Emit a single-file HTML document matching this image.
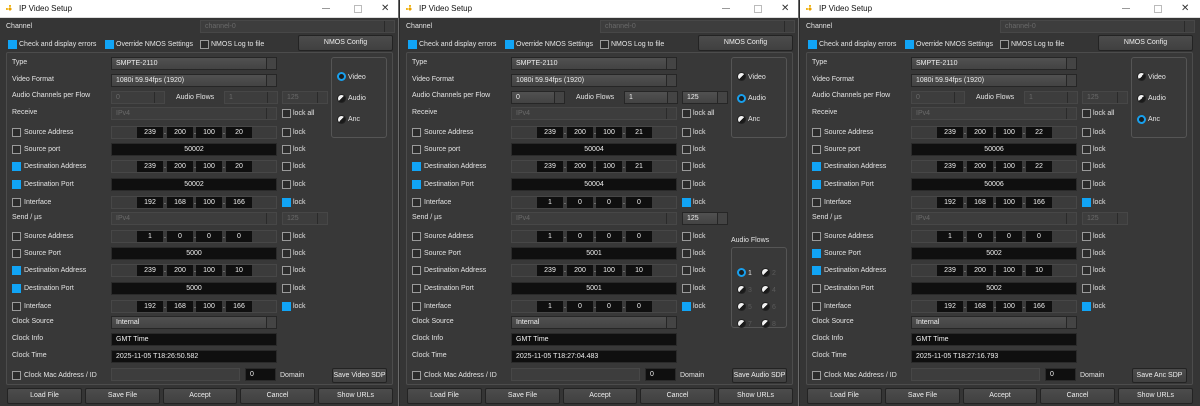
<!DOCTYPE html>
<html><head><meta charset="utf-8"><style>
*{box-sizing:border-box;margin:0;padding:0}
body{width:1200px;height:406px;background:#2b2b2b;overflow:hidden;position:relative;font-family:"Liberation Sans",sans-serif;font-size:7px;color:#e4e4e4}
.w{position:absolute;top:0;width:399px;height:406px;background:#353535;overflow:hidden;border-right:1px solid #6a6a6a}
.w>*{position:absolute}
.tb{left:0;top:0;width:100%;height:18px;background:#fff;border-bottom:1px solid #ddd;color:#111}
.tb .tt{position:absolute;left:19px;top:4px;font-size:8px}
.tb .ic{position:absolute;left:6px;top:5px;width:8px;height:8px;border-radius:50%;background:radial-gradient(circle,#e8a000 25%,transparent 30%),radial-gradient(circle at 10% 50%,#f0b000 12%,transparent 15%),radial-gradient(circle at 50% 10%,#f0b000 12%,transparent 15%)}
.tb .mn{position:absolute;left:322px;top:8px;width:8px;border-top:1px solid #999}
.tb .mx{position:absolute;left:354px;top:5px;width:8px;height:8px;border:1px solid #bbb}
.tb .cl{position:absolute;left:381px;top:3px;font-size:10px;color:#333}
.l{line-height:12px;white-space:nowrap;transform:translateY(1px)}
.cb{width:9px;height:9px;border:1px solid #9a9a9a;background:#2c2c2c}
.cb.on{background:#11a4f5;border-color:#11a4f5}
.f{height:13px;background:#0f0f0f;border:1px solid #2a2a2a;text-align:center;line-height:11px;color:#eee}
.cmb{height:13px;background:linear-gradient(#515151,#434343);border:1px solid #262626;line-height:11px;padding-left:4px;color:#eee}
.cmb s{position:absolute;right:0;top:0;width:10px;height:100%;border-left:1px solid #262626;background:#444}
.dis{background:#3d3d3d;border-color:#474747;color:#6a6a6a}
.dis s{background:#3d3d3d;border-left-color:#2a2a2a}
.ip{left:111px;width:166px;height:13px;background:#3b3b3b;border:1px solid #474747}
.ip i,.ip b{position:absolute;top:0;height:11px;line-height:11px;font-style:normal;text-align:center;color:#eee}
.ip i{width:26px;background:#0f0f0f}
.ip b{width:4px;font-weight:normal}
.grp{left:6px;top:52px;width:387px;height:333px;border:1px solid #4c4c4c;border-radius:2px;background:#383838}
.rb{border:1px solid #555;border-radius:3px;background:#393939}
.r{width:9px;height:9px;border-radius:50%;background:linear-gradient(135deg,#f2f2f2 50%,#1a1a1a 50%);border:1px solid #222}
.r.on{background:#1d1d1d;border:2px solid #18a0ee}
.bt{height:16px;background:linear-gradient(#4c4c4c,#404040);border:1px solid #232323;border-radius:2px;text-align:center;line-height:14px;color:#eee;white-space:nowrap;overflow:hidden}
.g{color:#5a5a5a}
</style></head><body>

<!-- WINDOW 1 -->
<div class="w" style="left:0">
<div class="tb"><span class="ic"></span><span class="tt">IP Video Setup</span><span class="mn"></span><span class="mx"></span><span class="cl">✕</span></div>
<div class="l" style="left:6px;top:20px">Channel</div>
<div class="cmb dis" style="left:200px;top:20px;width:195px">channel-0<s></s></div>
<div class="cb on" style="left:8px;top:40px"></div><div class="l" style="left:19px;top:38px">Check and display errors</div>
<div class="cb on" style="left:105px;top:40px"></div><div class="l" style="left:116px;top:38px">Override NMOS Settings</div>
<div class="cb" style="left:200px;top:40px"></div><div class="l" style="left:211px;top:38px">NMOS Log to file</div>
<div class="bt" style="left:298px;top:35px;width:95px">NMOS Config</div>
<div class="grp"></div>
<div class="rb" style="left:331px;top:57px;width:56px;height:81px"></div>
<div class="r on" style="left:337px;top:72px"></div><div class="l" style="left:348px;top:71px">Video</div>
<div class="r" style="left:337px;top:94px"></div><div class="l" style="left:348px;top:92px">Audio</div>
<div class="r" style="left:337px;top:115px"></div><div class="l" style="left:348px;top:113px">Anc</div>

<div class="l" style="left:12px;top:56px">Type</div>
<div class="cmb" style="left:111px;top:57px;width:166px">SMPTE-2110<s></s></div>
<div class="l" style="left:12px;top:73px">Video Format</div>
<div class="cmb" style="left:111px;top:74px;width:166px">1080i 59.94fps (1920)<s></s></div>
<div class="l" style="left:12px;top:89px">Audio Channels per Flow</div>
<div class="cmb dis" style="left:111px;top:91px;width:54px">0<s></s></div>
<div class="l" style="left:176px;top:91px">Audio Flows</div>
<div class="cmb dis" style="left:224px;top:91px;width:54px">1<s></s></div>
<div class="cmb dis" style="left:282px;top:91px;width:46px">125<s></s></div>
<div class="l" style="left:12px;top:106px">Receive</div>
<div class="cmb dis" style="left:111px;top:107px;width:166px">IPv4<s></s></div>
<div class="cb" style="left:282px;top:109px"></div><div class="l" style="left:293px;top:107px">lock all</div>

<div class="cb" style="left:12px;top:128px"></div><div class="l" style="left:24px;top:126px">Source Address</div>
<div class="ip" style="top:126px"><i style="left:25px">239</i><b style="left:51px">.</b><i style="left:55px">200</i><b style="left:81px">.</b><i style="left:84px">100</i><b style="left:110px">.</b><i style="left:114px">20</i></div>
<div class="cb" style="left:282px;top:128px"></div><div class="l" style="left:293px;top:126px">lock</div>
<div class="cb" style="left:12px;top:145px"></div><div class="l" style="left:24px;top:143px">Source port</div>
<div class="f" style="left:111px;top:143px;width:166px">50002</div>
<div class="cb" style="left:282px;top:145px"></div><div class="l" style="left:293px;top:143px">lock</div>
<div class="cb on" style="left:12px;top:162px"></div><div class="l" style="left:24px;top:160px">Destination Address</div>
<div class="ip" style="top:160px"><i style="left:25px">239</i><b style="left:51px">.</b><i style="left:55px">200</i><b style="left:81px">.</b><i style="left:84px">100</i><b style="left:110px">.</b><i style="left:114px">20</i></div>
<div class="cb" style="left:282px;top:162px"></div><div class="l" style="left:293px;top:160px">lock</div>
<div class="cb on" style="left:12px;top:180px"></div><div class="l" style="left:24px;top:178px">Destination Port</div>
<div class="f" style="left:111px;top:178px;width:166px">50002</div>
<div class="cb" style="left:282px;top:180px"></div><div class="l" style="left:293px;top:178px">lock</div>
<div class="cb" style="left:12px;top:198px"></div><div class="l" style="left:24px;top:196px">Interface</div>
<div class="ip" style="top:196px"><i style="left:25px">192</i><b style="left:51px">.</b><i style="left:55px">168</i><b style="left:81px">.</b><i style="left:84px">100</i><b style="left:110px">.</b><i style="left:114px">166</i></div>
<div class="cb on" style="left:282px;top:198px"></div><div class="l" style="left:293px;top:196px">lock</div>

<div class="l" style="left:12px;top:211px">Send / µs</div>
<div class="cmb dis" style="left:111px;top:212px;width:166px">IPv4<s></s></div>
<div class="cmb dis" style="left:282px;top:212px;width:46px">125<s></s></div>
<div class="cb" style="left:12px;top:232px"></div><div class="l" style="left:24px;top:230px">Source Address</div>
<div class="ip" style="top:230px"><i style="left:25px">1</i><b style="left:51px">.</b><i style="left:55px">0</i><b style="left:81px">.</b><i style="left:84px">0</i><b style="left:110px">.</b><i style="left:114px">0</i></div>
<div class="cb" style="left:282px;top:232px"></div><div class="l" style="left:293px;top:230px">lock</div>
<div class="cb" style="left:12px;top:249px"></div><div class="l" style="left:24px;top:247px">Source Port</div>
<div class="f" style="left:111px;top:247px;width:166px">5000</div>
<div class="cb" style="left:282px;top:249px"></div><div class="l" style="left:293px;top:247px">lock</div>
<div class="cb on" style="left:12px;top:266px"></div><div class="l" style="left:24px;top:264px">Destination Address</div>
<div class="ip" style="top:264px"><i style="left:25px">239</i><b style="left:51px">.</b><i style="left:55px">200</i><b style="left:81px">.</b><i style="left:84px">100</i><b style="left:110px">.</b><i style="left:114px">10</i></div>
<div class="cb" style="left:282px;top:266px"></div><div class="l" style="left:293px;top:264px">lock</div>
<div class="cb on" style="left:12px;top:284px"></div><div class="l" style="left:24px;top:282px">Destination Port</div>
<div class="f" style="left:111px;top:282px;width:166px">5000</div>
<div class="cb" style="left:282px;top:284px"></div><div class="l" style="left:293px;top:282px">lock</div>
<div class="cb" style="left:12px;top:302px"></div><div class="l" style="left:24px;top:300px">Interface</div>
<div class="ip" style="top:300px"><i style="left:25px">192</i><b style="left:51px">.</b><i style="left:55px">168</i><b style="left:81px">.</b><i style="left:84px">100</i><b style="left:110px">.</b><i style="left:114px">166</i></div>
<div class="cb on" style="left:282px;top:302px"></div><div class="l" style="left:293px;top:300px">lock</div>

<div class="l" style="left:12px;top:315px">Clock Source</div>
<div class="cmb" style="left:111px;top:316px;width:166px">Internal<s></s></div>
<div class="l" style="left:12px;top:332px">Clock Info</div>
<div class="f" style="left:111px;top:333px;width:166px;text-align:left;padding-left:4px">GMT Time</div>
<div class="l" style="left:12px;top:349px">Clock Time</div>
<div class="f" style="left:111px;top:350px;width:166px;text-align:left;padding-left:4px">2025-11-05 T18:26:50.582</div>
<div class="cb" style="left:12px;top:371px"></div><div class="l" style="left:24px;top:369px">Clock Mac Address / ID</div>
<div class="f dis" style="left:111px;top:368px;width:129px"></div>
<div class="f" style="left:245px;top:368px;width:31px;text-align:left;padding-left:4px">0</div>
<div class="l" style="left:280px;top:369px">Domain</div>
<div class="bt" style="left:332px;top:368px;width:55px;height:15px;line-height:13px">Save Video SDP</div>

<div class="bt" style="left:7px;top:388px;width:75px">Load File</div>
<div class="bt" style="left:85px;top:388px;width:75px">Save File</div>
<div class="bt" style="left:163px;top:388px;width:74px">Accept</div>
<div class="bt" style="left:240px;top:388px;width:75px">Cancel</div>
<div class="bt" style="left:318px;top:388px;width:75px">Show URLs</div>
</div>

<!-- WINDOW 2 -->
<div class="w" style="left:400px">
<div class="tb"><span class="ic"></span><span class="tt">IP Video Setup</span><span class="mn"></span><span class="mx"></span><span class="cl">✕</span></div>
<div class="l" style="left:6px;top:20px">Channel</div>
<div class="cmb dis" style="left:200px;top:20px;width:195px">channel-0<s></s></div>
<div class="cb on" style="left:8px;top:40px"></div><div class="l" style="left:19px;top:38px">Check and display errors</div>
<div class="cb on" style="left:105px;top:40px"></div><div class="l" style="left:116px;top:38px">Override NMOS Settings</div>
<div class="cb" style="left:200px;top:40px"></div><div class="l" style="left:211px;top:38px">NMOS Log to file</div>
<div class="bt" style="left:298px;top:35px;width:95px">NMOS Config</div>
<div class="grp"></div>
<div class="rb" style="left:331px;top:57px;width:56px;height:81px"></div>
<div class="r" style="left:337px;top:72px"></div><div class="l" style="left:348px;top:71px">Video</div>
<div class="r on" style="left:337px;top:94px"></div><div class="l" style="left:348px;top:92px">Audio</div>
<div class="r" style="left:337px;top:115px"></div><div class="l" style="left:348px;top:113px">Anc</div>

<div class="l" style="left:331px;top:234px">Audio Flows</div>
<div class="rb" style="left:331px;top:247px;width:56px;height:81px"></div>
<div class="r on" style="left:337px;top:268px"></div><div class="l" style="left:348px;top:267px">1</div>
<div class="r" style="left:361px;top:268px"></div><div class="l g" style="left:372px;top:267px">2</div>
<div class="r" style="left:337px;top:285px"></div><div class="l g" style="left:348px;top:284px">3</div>
<div class="r" style="left:361px;top:285px"></div><div class="l g" style="left:372px;top:284px">4</div>
<div class="r" style="left:337px;top:302px"></div><div class="l g" style="left:348px;top:301px">5</div>
<div class="r" style="left:361px;top:302px"></div><div class="l g" style="left:372px;top:301px">6</div>
<div class="r" style="left:337px;top:319px"></div><div class="l g" style="left:348px;top:318px">7</div>
<div class="r" style="left:361px;top:319px"></div><div class="l g" style="left:372px;top:318px">8</div>

<div class="l" style="left:12px;top:56px">Type</div>
<div class="cmb" style="left:111px;top:57px;width:166px">SMPTE-2110<s></s></div>
<div class="l" style="left:12px;top:73px">Video Format</div>
<div class="cmb" style="left:111px;top:74px;width:166px">1080i 59.94fps (1920)<s></s></div>
<div class="l" style="left:12px;top:89px">Audio Channels per Flow</div>
<div class="cmb" style="left:111px;top:91px;width:54px">0<s></s></div>
<div class="l" style="left:176px;top:91px">Audio Flows</div>
<div class="cmb" style="left:224px;top:91px;width:54px">1<s></s></div>
<div class="cmb" style="left:282px;top:91px;width:46px">125<s></s></div>
<div class="l" style="left:12px;top:106px">Receive</div>
<div class="cmb dis" style="left:111px;top:107px;width:166px">IPv4<s></s></div>
<div class="cb" style="left:282px;top:109px"></div><div class="l" style="left:293px;top:107px">lock all</div>

<div class="cb" style="left:12px;top:128px"></div><div class="l" style="left:24px;top:126px">Source Address</div>
<div class="ip" style="top:126px"><i style="left:25px">239</i><b style="left:51px">.</b><i style="left:55px">200</i><b style="left:81px">.</b><i style="left:84px">100</i><b style="left:110px">.</b><i style="left:114px">21</i></div>
<div class="cb" style="left:282px;top:128px"></div><div class="l" style="left:293px;top:126px">lock</div>
<div class="cb" style="left:12px;top:145px"></div><div class="l" style="left:24px;top:143px">Source port</div>
<div class="f" style="left:111px;top:143px;width:166px">50004</div>
<div class="cb" style="left:282px;top:145px"></div><div class="l" style="left:293px;top:143px">lock</div>
<div class="cb on" style="left:12px;top:162px"></div><div class="l" style="left:24px;top:160px">Destination Address</div>
<div class="ip" style="top:160px"><i style="left:25px">239</i><b style="left:51px">.</b><i style="left:55px">200</i><b style="left:81px">.</b><i style="left:84px">100</i><b style="left:110px">.</b><i style="left:114px">21</i></div>
<div class="cb" style="left:282px;top:162px"></div><div class="l" style="left:293px;top:160px">lock</div>
<div class="cb on" style="left:12px;top:180px"></div><div class="l" style="left:24px;top:178px">Destination Port</div>
<div class="f" style="left:111px;top:178px;width:166px">50004</div>
<div class="cb" style="left:282px;top:180px"></div><div class="l" style="left:293px;top:178px">lock</div>
<div class="cb" style="left:12px;top:198px"></div><div class="l" style="left:24px;top:196px">Interface</div>
<div class="ip" style="top:196px"><i style="left:25px">1</i><b style="left:51px">.</b><i style="left:55px">0</i><b style="left:81px">.</b><i style="left:84px">0</i><b style="left:110px">.</b><i style="left:114px">0</i></div>
<div class="cb on" style="left:282px;top:198px"></div><div class="l" style="left:293px;top:196px">lock</div>

<div class="l" style="left:12px;top:211px">Send / µs</div>
<div class="cmb dis" style="left:111px;top:212px;width:166px">IPv4<s></s></div>
<div class="cmb" style="left:282px;top:212px;width:46px">125<s></s></div>
<div class="cb" style="left:12px;top:232px"></div><div class="l" style="left:24px;top:230px">Source Address</div>
<div class="ip" style="top:230px"><i style="left:25px">1</i><b style="left:51px">.</b><i style="left:55px">0</i><b style="left:81px">.</b><i style="left:84px">0</i><b style="left:110px">.</b><i style="left:114px">0</i></div>
<div class="cb" style="left:282px;top:232px"></div><div class="l" style="left:293px;top:230px">lock</div>
<div class="cb" style="left:12px;top:249px"></div><div class="l" style="left:24px;top:247px">Source Port</div>
<div class="f" style="left:111px;top:247px;width:166px">5001</div>
<div class="cb" style="left:282px;top:249px"></div><div class="l" style="left:293px;top:247px">lock</div>
<div class="cb" style="left:12px;top:266px"></div><div class="l" style="left:24px;top:264px">Destination Address</div>
<div class="ip" style="top:264px"><i style="left:25px">239</i><b style="left:51px">.</b><i style="left:55px">200</i><b style="left:81px">.</b><i style="left:84px">100</i><b style="left:110px">.</b><i style="left:114px">10</i></div>
<div class="cb" style="left:282px;top:266px"></div><div class="l" style="left:293px;top:264px">lock</div>
<div class="cb" style="left:12px;top:284px"></div><div class="l" style="left:24px;top:282px">Destination Port</div>
<div class="f" style="left:111px;top:282px;width:166px">5001</div>
<div class="cb" style="left:282px;top:284px"></div><div class="l" style="left:293px;top:282px">lock</div>
<div class="cb" style="left:12px;top:302px"></div><div class="l" style="left:24px;top:300px">Interface</div>
<div class="ip" style="top:300px"><i style="left:25px">1</i><b style="left:51px">.</b><i style="left:55px">0</i><b style="left:81px">.</b><i style="left:84px">0</i><b style="left:110px">.</b><i style="left:114px">0</i></div>
<div class="cb on" style="left:282px;top:302px"></div><div class="l" style="left:293px;top:300px">lock</div>

<div class="l" style="left:12px;top:315px">Clock Source</div>
<div class="cmb" style="left:111px;top:316px;width:166px">Internal<s></s></div>
<div class="l" style="left:12px;top:332px">Clock Info</div>
<div class="f" style="left:111px;top:333px;width:166px;text-align:left;padding-left:4px">GMT Time</div>
<div class="l" style="left:12px;top:349px">Clock Time</div>
<div class="f" style="left:111px;top:350px;width:166px;text-align:left;padding-left:4px">2025-11-05 T18:27:04.483</div>
<div class="cb" style="left:12px;top:371px"></div><div class="l" style="left:24px;top:369px">Clock Mac Address / ID</div>
<div class="f dis" style="left:111px;top:368px;width:129px"></div>
<div class="f" style="left:245px;top:368px;width:31px;text-align:left;padding-left:4px">0</div>
<div class="l" style="left:280px;top:369px">Domain</div>
<div class="bt" style="left:332px;top:368px;width:55px;height:15px;line-height:13px">Save Audio SDP</div>

<div class="bt" style="left:7px;top:388px;width:75px">Load File</div>
<div class="bt" style="left:85px;top:388px;width:75px">Save File</div>
<div class="bt" style="left:163px;top:388px;width:74px">Accept</div>
<div class="bt" style="left:240px;top:388px;width:75px">Cancel</div>
<div class="bt" style="left:318px;top:388px;width:75px">Show URLs</div>
</div>

<!-- WINDOW 3 -->
<div class="w" style="left:800px;width:400px;border-right:none">
<div class="tb"><span class="ic"></span><span class="tt">IP Video Setup</span><span class="mn"></span><span class="mx"></span><span class="cl">✕</span></div>
<div class="l" style="left:6px;top:20px">Channel</div>
<div class="cmb dis" style="left:200px;top:20px;width:195px">channel-0<s></s></div>
<div class="cb on" style="left:8px;top:40px"></div><div class="l" style="left:19px;top:38px">Check and display errors</div>
<div class="cb on" style="left:105px;top:40px"></div><div class="l" style="left:116px;top:38px">Override NMOS Settings</div>
<div class="cb" style="left:200px;top:40px"></div><div class="l" style="left:211px;top:38px">NMOS Log to file</div>
<div class="bt" style="left:298px;top:35px;width:95px">NMOS Config</div>
<div class="grp"></div>
<div class="rb" style="left:331px;top:57px;width:56px;height:81px"></div>
<div class="r" style="left:337px;top:72px"></div><div class="l" style="left:348px;top:71px">Video</div>
<div class="r" style="left:337px;top:94px"></div><div class="l" style="left:348px;top:92px">Audio</div>
<div class="r on" style="left:337px;top:115px"></div><div class="l" style="left:348px;top:113px">Anc</div>

<div class="l" style="left:12px;top:56px">Type</div>
<div class="cmb" style="left:111px;top:57px;width:166px">SMPTE-2110<s></s></div>
<div class="l" style="left:12px;top:73px">Video Format</div>
<div class="cmb" style="left:111px;top:74px;width:166px">1080i 59.94fps (1920)<s></s></div>
<div class="l" style="left:12px;top:89px">Audio Channels per Flow</div>
<div class="cmb dis" style="left:111px;top:91px;width:54px">0<s></s></div>
<div class="l" style="left:176px;top:91px">Audio Flows</div>
<div class="cmb dis" style="left:224px;top:91px;width:54px">1<s></s></div>
<div class="cmb dis" style="left:282px;top:91px;width:46px">125<s></s></div>
<div class="l" style="left:12px;top:106px">Receive</div>
<div class="cmb dis" style="left:111px;top:107px;width:166px">IPv4<s></s></div>
<div class="cb" style="left:282px;top:109px"></div><div class="l" style="left:293px;top:107px">lock all</div>

<div class="cb" style="left:12px;top:128px"></div><div class="l" style="left:24px;top:126px">Source Address</div>
<div class="ip" style="top:126px"><i style="left:25px">239</i><b style="left:51px">.</b><i style="left:55px">200</i><b style="left:81px">.</b><i style="left:84px">100</i><b style="left:110px">.</b><i style="left:114px">22</i></div>
<div class="cb" style="left:282px;top:128px"></div><div class="l" style="left:293px;top:126px">lock</div>
<div class="cb" style="left:12px;top:145px"></div><div class="l" style="left:24px;top:143px">Source port</div>
<div class="f" style="left:111px;top:143px;width:166px">50006</div>
<div class="cb" style="left:282px;top:145px"></div><div class="l" style="left:293px;top:143px">lock</div>
<div class="cb on" style="left:12px;top:162px"></div><div class="l" style="left:24px;top:160px">Destination Address</div>
<div class="ip" style="top:160px"><i style="left:25px">239</i><b style="left:51px">.</b><i style="left:55px">200</i><b style="left:81px">.</b><i style="left:84px">100</i><b style="left:110px">.</b><i style="left:114px">22</i></div>
<div class="cb" style="left:282px;top:162px"></div><div class="l" style="left:293px;top:160px">lock</div>
<div class="cb on" style="left:12px;top:180px"></div><div class="l" style="left:24px;top:178px">Destination Port</div>
<div class="f" style="left:111px;top:178px;width:166px">50006</div>
<div class="cb" style="left:282px;top:180px"></div><div class="l" style="left:293px;top:178px">lock</div>
<div class="cb" style="left:12px;top:198px"></div><div class="l" style="left:24px;top:196px">Interface</div>
<div class="ip" style="top:196px"><i style="left:25px">192</i><b style="left:51px">.</b><i style="left:55px">168</i><b style="left:81px">.</b><i style="left:84px">100</i><b style="left:110px">.</b><i style="left:114px">166</i></div>
<div class="cb on" style="left:282px;top:198px"></div><div class="l" style="left:293px;top:196px">lock</div>

<div class="l" style="left:12px;top:211px">Send / µs</div>
<div class="cmb dis" style="left:111px;top:212px;width:166px">IPv4<s></s></div>
<div class="cmb dis" style="left:282px;top:212px;width:46px">125<s></s></div>
<div class="cb" style="left:12px;top:232px"></div><div class="l" style="left:24px;top:230px">Source Address</div>
<div class="ip" style="top:230px"><i style="left:25px">1</i><b style="left:51px">.</b><i style="left:55px">0</i><b style="left:81px">.</b><i style="left:84px">0</i><b style="left:110px">.</b><i style="left:114px">0</i></div>
<div class="cb" style="left:282px;top:232px"></div><div class="l" style="left:293px;top:230px">lock</div>
<div class="cb on" style="left:12px;top:249px"></div><div class="l" style="left:24px;top:247px">Source Port</div>
<div class="f" style="left:111px;top:247px;width:166px">5002</div>
<div class="cb" style="left:282px;top:249px"></div><div class="l" style="left:293px;top:247px">lock</div>
<div class="cb on" style="left:12px;top:266px"></div><div class="l" style="left:24px;top:264px">Destination Address</div>
<div class="ip" style="top:264px"><i style="left:25px">239</i><b style="left:51px">.</b><i style="left:55px">200</i><b style="left:81px">.</b><i style="left:84px">100</i><b style="left:110px">.</b><i style="left:114px">10</i></div>
<div class="cb" style="left:282px;top:266px"></div><div class="l" style="left:293px;top:264px">lock</div>
<div class="cb" style="left:12px;top:284px"></div><div class="l" style="left:24px;top:282px">Destination Port</div>
<div class="f" style="left:111px;top:282px;width:166px">5002</div>
<div class="cb" style="left:282px;top:284px"></div><div class="l" style="left:293px;top:282px">lock</div>
<div class="cb" style="left:12px;top:302px"></div><div class="l" style="left:24px;top:300px">Interface</div>
<div class="ip" style="top:300px"><i style="left:25px">192</i><b style="left:51px">.</b><i style="left:55px">168</i><b style="left:81px">.</b><i style="left:84px">100</i><b style="left:110px">.</b><i style="left:114px">166</i></div>
<div class="cb on" style="left:282px;top:302px"></div><div class="l" style="left:293px;top:300px">lock</div>

<div class="l" style="left:12px;top:315px">Clock Source</div>
<div class="cmb" style="left:111px;top:316px;width:166px">Internal<s></s></div>
<div class="l" style="left:12px;top:332px">Clock Info</div>
<div class="f" style="left:111px;top:333px;width:166px;text-align:left;padding-left:4px">GMT Time</div>
<div class="l" style="left:12px;top:349px">Clock Time</div>
<div class="f" style="left:111px;top:350px;width:166px;text-align:left;padding-left:4px">2025-11-05 T18:27:16.793</div>
<div class="cb" style="left:12px;top:371px"></div><div class="l" style="left:24px;top:369px">Clock Mac Address / ID</div>
<div class="f dis" style="left:111px;top:368px;width:129px"></div>
<div class="f" style="left:245px;top:368px;width:31px;text-align:left;padding-left:4px">0</div>
<div class="l" style="left:280px;top:369px">Domain</div>
<div class="bt" style="left:332px;top:368px;width:55px;height:15px;line-height:13px">Save Anc SDP</div>

<div class="bt" style="left:7px;top:388px;width:75px">Load File</div>
<div class="bt" style="left:85px;top:388px;width:75px">Save File</div>
<div class="bt" style="left:163px;top:388px;width:74px">Accept</div>
<div class="bt" style="left:240px;top:388px;width:75px">Cancel</div>
<div class="bt" style="left:318px;top:388px;width:75px">Show URLs</div>
</div>
</body></html>
